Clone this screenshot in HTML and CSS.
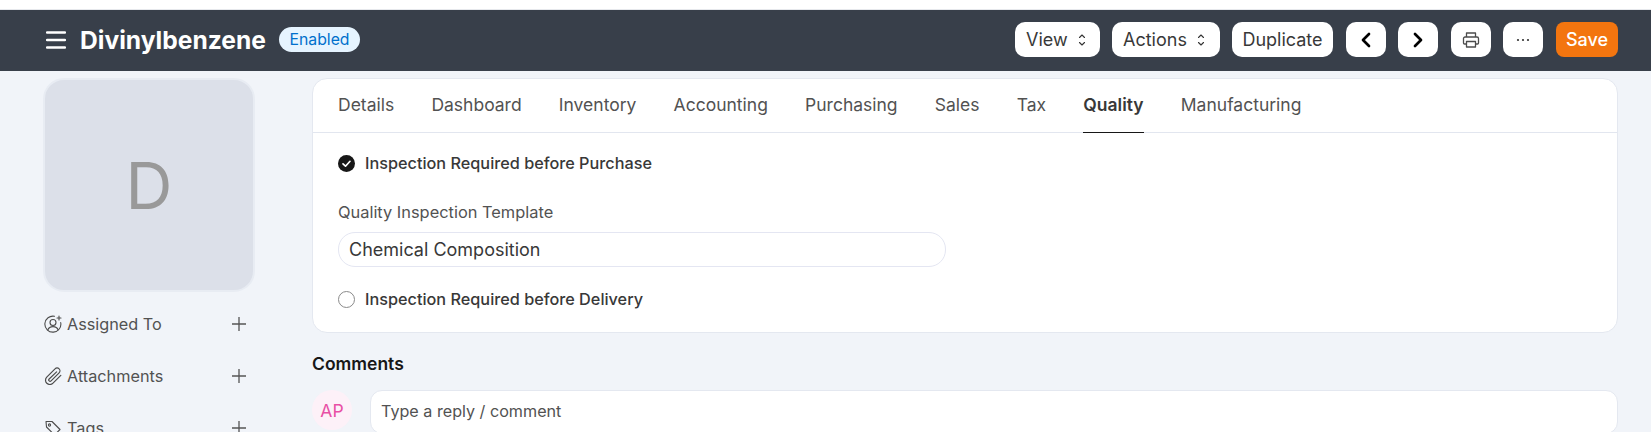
FILE: index.html
```html
<!DOCTYPE html>
<html lang="en">
<head>
<meta charset="utf-8">
<title>Divinylbenzene</title>
<link rel="stylesheet" href="styles.css">
</head>
<body>
<div class="topstrip"></div>
<header class="navbar">
  <div class="nav-left">
    <svg class="menu-icon" viewBox="0 0 20 18" width="20" height="18"><path d="M1 1.500h18M1 9h18M1 16.500h18" fill="none" stroke="#fff" stroke-width="2.400" stroke-linecap="round"/></svg>
    <h1 class="title">Divinylbenzene</h1>
    <span class="pill">Enabled</span>
  </div>
  <div class="nav-right">
    <button class="btn btn-view">View<svg class="updown" viewBox="0 0 8 14" width="8" height="14"><path d="M1.500 4.500 4 2l2.500 2.500M1.500 9.500 4 12l2.500-2.500" fill="none" stroke="#333" stroke-width="1.100" stroke-linecap="round" stroke-linejoin="round"/></svg></button>
    <button class="btn btn-actions">Actions<svg class="updown" viewBox="0 0 8 14" width="8" height="14"><path d="M1.500 4.500 4 2l2.500 2.500M1.500 9.500 4 12l2.500-2.500" fill="none" stroke="#333" stroke-width="1.100" stroke-linecap="round" stroke-linejoin="round"/></svg></button>
    <button class="btn btn-dup">Duplicate</button>
    <button class="btn btn-icon btn-prev"><svg viewBox="0 0 12 18" width="12" height="18"><path d="M9 3 3 9l6 6" fill="none" stroke="#000" stroke-width="2.700" stroke-linecap="round" stroke-linejoin="round"/></svg></button>
    <button class="btn btn-icon btn-next"><svg viewBox="0 0 12 18" width="12" height="18"><path d="m3 3 6 6-6 6" fill="none" stroke="#000" stroke-width="2.700" stroke-linecap="round" stroke-linejoin="round"/></svg></button>
    <button class="btn btn-icon btn-print"><svg viewBox="0 0 18 18" width="18" height="18"><path d="M4.500 6V2h9v4M4.500 13H2.500a1 1 0 0 1-1-1V7.500a1.500 1.500 0 0 1 1.500-1.500h12a1.500 1.500 0 0 1 1.500 1.500V12a1 1 0 0 1-1 1h-2M4.500 10.500h9V16h-9z" fill="none" stroke="#4c4c4c" stroke-width="1.300" stroke-linejoin="round"/></svg></button>
    <button class="btn btn-icon btn-more"><svg viewBox="0 0 14 4" width="14" height="4"><circle cx="2" cy="2" r="1.100" fill="#333"/><circle cx="7" cy="2" r="1.100" fill="#333"/><circle cx="12" cy="2" r="1.100" fill="#333"/></svg></button>
    <button class="btn btn-save">Save</button>
  </div>
</header>
<div class="page">
  <aside class="sidebar">
    <div class="avatar-box">D</div>
    <div class="side-row">
      <svg class="side-icon" viewBox="0 0 18 18" width="18" height="18"><g fill="none" stroke="#4c4c4c" stroke-width="1.100" stroke-linecap="round"><path d="M10.500 1.300A8 8 0 1 0 16.700 7.500"/><circle cx="9" cy="7.500" r="3"/><path d="M3.800 15c.8-2.200 2.800-3.400 5.200-3.400s4.400 1.200 5.200 3.400M15 1v4M13 3h4"/></g></svg>
      <span class="side-label">Assigned To</span>
      <svg class="plus" viewBox="0 0 16 16" width="16" height="16"><path d="M8 1v14M1 8h14" stroke="#555" stroke-width="1.300" fill="none"/></svg>
    </div>
    <div class="side-row">
      <svg class="side-icon" viewBox="1.500 1.500 15 15" width="18" height="18"><path d="M15.500 8.500 9 15a3.600 3.600 0 0 1-5.200-5.100L10.700 3a2.400 2.400 0 0 1 3.400 3.400l-6.700 6.700a1.100 1.100 0 0 1-1.600-1.600L12 5.600" fill="none" stroke="#4c4c4c" stroke-width="1" stroke-linecap="round" stroke-linejoin="round"/></svg>
      <span class="side-label">Attachments</span>
      <svg class="plus" viewBox="0 0 16 16" width="16" height="16"><path d="M8 1v14M1 8h14" stroke="#555" stroke-width="1.300" fill="none"/></svg>
    </div>
    <div class="side-row">
      <svg class="side-icon" viewBox="0 0 18 18" width="18" height="18"><path d="M2 2.500h6l8 8-5.500 5.500-8-8z" fill="none" stroke="#4c4c4c" stroke-width="1.100" stroke-linejoin="round"/><circle cx="5.500" cy="6" r="1.100" fill="none" stroke="#4c4c4c" stroke-width="1.100"/></svg>
      <span class="side-label">Tags</span>
      <svg class="plus" viewBox="0 0 16 16" width="16" height="16"><path d="M8 1v14M1 8h14" stroke="#555" stroke-width="1.300" fill="none"/></svg>
    </div>
  </aside>
  <main class="main">
    <section class="card">
      <nav class="tabs">
        <a class="tab">Details</a>
        <a class="tab">Dashboard</a>
        <a class="tab">Inventory</a>
        <a class="tab">Accounting</a>
        <a class="tab">Purchasing</a>
        <a class="tab">Sales</a>
        <a class="tab">Tax</a>
        <a class="tab tab-active">Quality</a>
        <a class="tab">Manufacturing</a>
      </nav>
      <div class="form">
        <div class="check-row check-first">
          <svg class="check" viewBox="0 0 17 17" width="17" height="17"><circle cx="8.500" cy="8.500" r="8.500" fill="#171717"/><path d="m5 8.800 2.500 2.400L12 6.300" fill="none" stroke="#fff" stroke-width="1.700" stroke-linecap="round" stroke-linejoin="round"/></svg>
          <span class="check-label">Inspection Required before Purchase</span>
        </div>
        <label class="field-label">Quality Inspection Template</label>
        <div class="input">Chemical Composition</div>
        <div class="check-row check-second">
          <span class="radio"></span>
          <span class="check-label">Inspection Required before Delivery</span>
        </div>
      </div>
    </section>
    <h2 class="comments-title">Comments</h2>
    <div class="comment-row">
      <span class="comment-avatar">AP</span>
      <div class="comment-box">Type a reply / comment</div>
    </div>
  </main>
</div>
</body>
</html>
```
FILE: styles.css
```css
* { box-sizing: border-box; }
html, body { margin: 0; height: 100%; overflow: hidden; }
body { background: #f1f4f9; font-family: Inter, "Liberation Sans", sans-serif; color: #383838; font-size: 16.25px; }
.topstrip { height: 10px; background: #fff; border-bottom: 1px solid #e6e8ec; }
.navbar { height: 61px; background: #383f4a; display: flex; justify-content: space-between; align-items: center; padding: 0 33px 2px 46px; }
.nav-left { display: flex; align-items: center; }
.menu-icon { display: block; }
.title { margin: 0 0 0 14px; font-size: 24.6px; line-height: 30px; font-weight: 700; color: #fff; }
.pill { margin-left: 13px; height: 25px; padding: 0 10.5px; border-radius: 13px; background: #e6f4ff; color: #0070cc; font-size: 15.8px; line-height: 25px; display: block; }
.nav-right { display: flex; align-items: center; gap: 12px; }
.btn { height: 35px; border: 0; border-radius: 10px; background: #fff; color: #383838; font: inherit; font-size: 18px; padding: 0; display: flex; align-items: center; justify-content: center; }
.btn-view { width: 85px; justify-content: flex-start; padding-left: 11px; }
.btn-actions { width: 108px; justify-content: flex-start; padding-left: 11px; }
.btn-dup { width: 101px; }
.updown { margin-left: 10px; }
.btn-icon { width: 40px; }
.btn-prev, .btn-print, .btn-save { margin-left: 1px; }
.btn-save { width: 62px; background: #f3750f; color: #fff; font-weight: 500; border-radius: 8px; }
.page { display: flex; padding: 7px 33px 0 43px; gap: 57px; }
.sidebar { width: 212px; flex: none; }
.avatar-box { height: 214px; margin-bottom: 6px; border: 2px solid #e8ecf3; border-radius: 21px; background: #dce0e9; color: #999; font-size: 65px; display: flex; align-items: center; justify-content: center; }
.side-row { height: 52px; padding-left: 1px; display: flex; align-items: center; color: #525252; }
.side-icon { flex: none; }
.side-label { margin-left: 5px; flex: 1; }
.plus { margin-right: 8px; }
.main { flex: 1; min-width: 0; }
.card { background: #fff; border: 1px solid #e4e8f0; border-radius: 15px; height: 255px; }
.tabs { height: 54px; padding: 0 25px; display: flex; gap: 37.2px; border-bottom: 1px solid #e2e6ef; }
.tab { height: 53px; line-height: 52px; color: #525252; font-size: 17.5px; }
.tab-active { color: #383838; font-weight: 600; border-bottom: 1px solid #171717; height: 54px; }
.form { padding: 0 25px; }
.check-row { display: flex; align-items: center; height: 20px; }
.check-first { margin-top: 20px; }
.check-second { margin-top: 22px; }
.check { display: block; flex: none; }
.radio { width: 17px; height: 17px; border: 1px solid #8a8a8a; border-radius: 50%; background: #fff; flex: none; }
.check-label { margin-left: 10px; font-size: 16.25px; font-weight: 500; }
.field-label { display: block; margin-top: 29px; height: 20px; line-height: 20px; font-size: 16.4px; color: #525252; }
.input { margin-top: 10px; width: 608px; height: 35px; line-height: 33px; padding: 0 10px; border: 1px solid #e4e6f2; border-radius: 17px; background: #fff; font-size: 18px; }
.comments-title { margin: 19px 0 0; font-size: 17.5px; line-height: 24px; font-weight: 600; color: #171717; }
.comment-row { display: flex; gap: 18px; margin-top: 14px; }
.comment-avatar { width: 40px; height: 40px; border-radius: 50%; background: #fdf1f8; color: #e84fa5; display: flex; align-items: center; justify-content: center; flex: none; font-size: 17.5px; }
.comment-box { flex: 1; height: 44px; padding: 0 10px; line-height: 41px; background: #fff; border: 1px solid #e4e8f0; border-radius: 12px; color: #525252; font-size: 16.15px; }
```
